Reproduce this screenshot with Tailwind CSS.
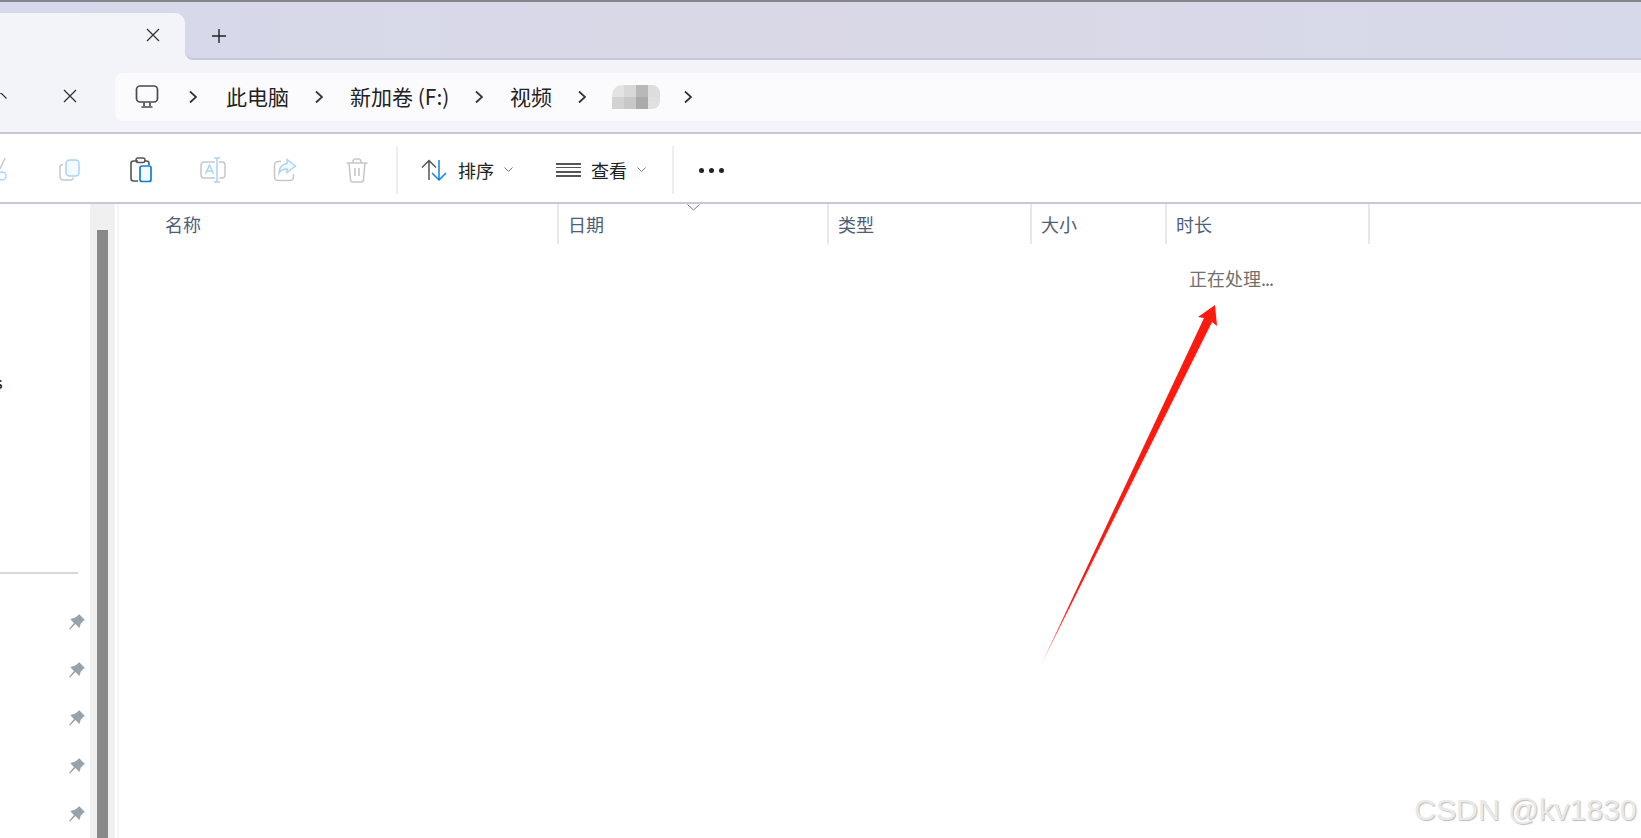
<!DOCTYPE html>
<html lang="zh-CN">
<head>
  <meta charset="UTF-8" />
  <title>视频 - 文件资源管理器</title>
  <script src="https://cdn.jsdelivr.net/npm/@tailwindcss/browser@4"></script>
</head>
<body class="bg-white font-['Noto_Sans_CJK_SC','Liberation_Sans',sans-serif] overflow-hidden">
<div class="relative w-[1641px] h-[838px] overflow-hidden flex flex-col">

  <!-- window edge -->
  <div class="h-[2px] bg-[#85868c]"></div>

  <!-- tab strip -->
  <div class="h-[58px] flex bg-linear-to-r from-[#d5d9eb] via-[#dad8e6] to-[#d6d9ea]">
    <div class="w-[185px] mt-[11px] bg-[#f3f4fa] rounded-tr-[10px] flex justify-end items-start pr-[24px] pt-[14px]">
      <svg class="w-[16px] h-[16px]" viewBox="0 0 16 16" fill="none" stroke="#333" stroke-width="1.3"><path d="M2 2l12 12M14 2L2 14"/></svg>
    </div>
    <div class="relative flex-1 border-b-2 border-[#c6c7da] pl-[26px] pt-[26px]">
      <div class="absolute left-0 -bottom-[2px] w-[8px] h-[10px] bg-[#f3f4fa]">
        <div class="w-full h-full bg-[#d5d9eb] border-b-2 border-[#c6c7da] rounded-bl-[8px]"></div>
      </div>
      <svg class="w-[16px] h-[16px]" viewBox="0 0 16 16" fill="none" stroke="#222" stroke-width="1.4"><path d="M8 1v14M1 8h14"/></svg>
    </div>
  </div>

  <!-- nav row -->
  <div class="h-[74px] flex items-center bg-[#f3f4f9] border-b-2 border-[#c6c7da]">
    <div class="w-[63px] flex">
      <svg class="w-[7px] h-[6px]" viewBox="0 0 7 6" fill="none" stroke="#333" stroke-width="1.2"><path d="M0 0.6L1 0l5.5 5.5"/></svg>
    </div>
    <svg class="w-[14px] h-[14px]" viewBox="0 0 14 14" fill="none" stroke="#333" stroke-width="1.3"><path d="M1 1l12 12M13 1L1 13"/></svg>
    <div class="ml-[38px] mt-[2px] flex-1 h-[48px] bg-[#fbfbfe] rounded-l-[8px] flex items-center text-[21px] text-[#222]">
      <svg class="ml-[20px] w-[24px] h-[24px]" viewBox="0 0 24 24" fill="none" stroke="#4a4a4a" stroke-width="1.7">
        <rect x="1.5" y="1" width="21" height="16" rx="3.5"/><path d="M9 17.5v3.5M15 17.5v3.5M6.5 22h11"/>
      </svg>
      <svg class="ml-[29px] w-[10px] h-[14px]" viewBox="0 0 10 14" fill="none" stroke="#333" stroke-width="1.7"><path d="M2 1.5L8 7l-6 5.500"/></svg>
      <span class="ml-[28px] w-[63px] whitespace-nowrap">此电脑</span>
      <svg class="ml-[25px] w-[10px] h-[14px]" viewBox="0 0 10 14" fill="none" stroke="#333" stroke-width="1.7"><path d="M2 1.5L8 7l-6 5.500"/></svg>
      <span class="ml-[26px] w-[98px] whitespace-nowrap">新加卷 (F:)</span>
      <svg class="ml-[26px] w-[10px] h-[14px]" viewBox="0 0 10 14" fill="none" stroke="#333" stroke-width="1.7"><path d="M2 1.5L8 7l-6 5.500"/></svg>
      <span class="ml-[26px] w-[44px] whitespace-nowrap">视频</span>
      <svg class="ml-[23px] w-[10px] h-[14px]" viewBox="0 0 10 14" fill="none" stroke="#333" stroke-width="1.7"><path d="M2 1.5L8 7l-6 5.500"/></svg>
      <!-- pixelated folder name -->
      <div class="ml-[25px] w-[48px] h-[24px] grid grid-cols-4 overflow-hidden rounded-r-[8px]">
        <div class="bg-[#e3e3e3] rounded-tl-[10px]"></div><div class="bg-[#d8d8d8]"></div><div class="bg-[#b8b8b8]"></div><div class="bg-[#dddddd]"></div>
        <div class="bg-[#d2d2d2]"></div><div class="bg-[#c8c8c8]"></div><div class="bg-[#aaaaaa]"></div><div class="bg-[#e0e0e0]"></div>
      </div>
      <svg class="ml-[23px] w-[10px] h-[14px]" viewBox="0 0 10 14" fill="none" stroke="#333" stroke-width="1.7"><path d="M2 1.5L8 7l-6 5.500"/></svg>
    </div>
  </div>

  <!-- command bar -->
  <div class="h-[70px] pt-[4px] flex items-center bg-white border-b-2 border-[#c8c8d8] text-[18px] text-[#222]">
    <svg class="w-[8px] h-[24px]" viewBox="0 0 8 24" fill="none">
      <path d="M5 0L0 11" stroke="#c8c8c8" stroke-width="1.500"/>
      <circle cx="2" cy="18" r="4" stroke="#a9d4f5" stroke-width="1.500"/>
    </svg>
    <svg class="ml-[50px] w-[24px] h-[24px]" viewBox="0 0 24 24" fill="none" stroke-width="1.500">
      <path d="M5 6.500h-.5A3 3 0 0 0 2 9.500v9A3.500 3.500 0 0 0 5.500 22h7a3 3 0 0 0 3-2.500" stroke="#c8c8c8"/>
      <rect x="8" y="2" width="13" height="16" rx="3.500" stroke="#a9d4f5" fill="#f4faff"/>
    </svg>
    <svg class="ml-[47px] w-[24px] h-[26px]" viewBox="0 0 24 26" fill="none">
      <path d="M9 4H4.500A2.500 2.500 0 0 0 2 6.500v15A2.500 2.500 0 0 0 4.500 24H9M15 4h2.500A2.500 2.500 0 0 1 20 6.500V8" stroke="#555" stroke-width="1.600"/>
      <rect x="7" y="1" width="9" height="4.500" rx="2" stroke="#555" stroke-width="1.500"/>
      <rect x="11" y="9" width="11" height="15.500" rx="2" stroke="#0f7fd8" stroke-width="1.700" fill="#f3f9fe"/>
    </svg>
    <svg class="ml-[47px] w-[26px] h-[26px]" viewBox="0 0 26 26" fill="none" stroke-width="1.500">
      <path d="M15 5H4A3 3 0 0 0 1 8v10a3 3 0 0 0 3 3h11M19 5h3a3 3 0 0 1 3 3v10a3 3 0 0 1-3 3h-3" stroke="#c8c8c8"/>
      <path d="M17 1v24M14 1h6M14 25h6M5.500 17L9.500 8l4 9M7 14h5" stroke="#a9d4f5"/>
    </svg>
    <svg class="ml-[47px] w-[24px] h-[24px]" viewBox="0 0 24 24" fill="none" stroke-width="1.500">
      <path d="M8 3.500H5A3.500 3.500 0 0 0 1.500 7v12A3.500 3.500 0 0 0 5 22.500h12a3.500 3.500 0 0 0 3.500-3.500v-3" stroke="#c8c8c8"/>
      <path d="M14 1.500l8.500 6.500L14 14.500v-3.500c-4 0-6.500 1.500-8 4 0-5 3-9 8-9.500z" stroke="#a9d4f5" fill="#f4faff"/>
    </svg>
    <svg class="ml-[49px] w-[22px] h-[25px]" viewBox="0 0 22 25" fill="none" stroke="#c8c8c8" stroke-width="1.600">
      <path d="M0.500 5h21M7 5V3.500A2.500 2.500 0 0 1 9.500 1h3A2.500 2.500 0 0 1 15 3.500V5M3 5l1.500 16.500A2.500 2.500 0 0 0 7 24h8a2.500 2.500 0 0 0 2.500-2.500L19 5M9 10v8M13 10v8"/>
    </svg>
    <div class="ml-[28px] w-[2px] h-[48px] bg-[#eeeeee]"></div>
    <svg class="ml-[23px] w-[26px] h-[22px]" viewBox="0 0 26 22" fill="none" stroke-width="1.500">
      <path d="M8 21V2M1 8.500L8 1.500l7 7" stroke="#555"/>
      <path d="M18 1v19M11 14l7 7 7-7" stroke="#1483dc"/>
    </svg>
    <span class="ml-[11px] w-[36px] whitespace-nowrap">排序</span>
    <svg class="ml-[10px] w-[9px] h-[6px]" viewBox="0 0 9 6" fill="none" stroke="#777" stroke-width="1"><path d="M.5 .5l4 4 4-4"/></svg>
    <div class="ml-[43px] w-[25px] h-[15px] flex flex-col justify-between">
      <div class="h-[2px] bg-[#555]"></div><div class="h-[1px] bg-[#555]"></div><div class="h-[2px] bg-[#555]"></div><div class="h-[2px] bg-[#555]"></div>
    </div>
    <span class="ml-[10px] w-[36px] whitespace-nowrap">查看</span>
    <svg class="ml-[10px] w-[9px] h-[6px]" viewBox="0 0 9 6" fill="none" stroke="#777" stroke-width="1"><path d="M.5 .5l4 4 4-4"/></svg>
    <div class="ml-[26px] w-[2px] h-[48px] bg-[#eeeeee]"></div>
    <div class="ml-[25px] flex gap-[5px]">
      <div class="w-[5px] h-[5px] rounded-full bg-[#222]"></div>
      <div class="w-[5px] h-[5px] rounded-full bg-[#222]"></div>
      <div class="w-[5px] h-[5px] rounded-full bg-[#222]"></div>
    </div>
  </div>

  <!-- body -->
  <div class="flex-1 flex min-h-0">
    <!-- nav pane -->
    <div class="w-[90px] flex flex-col overflow-hidden">
      <span class="h-[16px] mt-[170px] -ml-[5px] text-[16px] leading-[16px] text-black">s</span>
      <div class="mt-[182px] w-[78px] h-[2px] bg-[#d8d8d8]"></div>
      <div class="mt-[38px] pl-[69px] flex flex-col gap-[28px]">
        <svg class="w-[16px] h-[20px]" viewBox="0 0 16 16" fill="#96a3aa"><path d="M10 0l6 6-1.500 .8-3 3.200-.5 3-1 .8L6.500 10 1 15.500 0 15l5-6-3.500-3.500 1-1 3-.5L9 1.500z"/></svg>
        <svg class="w-[16px] h-[20px]" viewBox="0 0 16 16" fill="#96a3aa"><path d="M10 0l6 6-1.500 .8-3 3.200-.5 3-1 .8L6.500 10 1 15.500 0 15l5-6-3.500-3.500 1-1 3-.5L9 1.500z"/></svg>
        <svg class="w-[16px] h-[20px]" viewBox="0 0 16 16" fill="#96a3aa"><path d="M10 0l6 6-1.500 .8-3 3.200-.5 3-1 .8L6.500 10 1 15.500 0 15l5-6-3.500-3.500 1-1 3-.5L9 1.500z"/></svg>
        <svg class="w-[16px] h-[20px]" viewBox="0 0 16 16" fill="#96a3aa"><path d="M10 0l6 6-1.500 .8-3 3.200-.5 3-1 .8L6.500 10 1 15.500 0 15l5-6-3.500-3.500 1-1 3-.5L9 1.500z"/></svg>
        <svg class="w-[16px] h-[20px]" viewBox="0 0 16 16" fill="#96a3aa"><path d="M10 0l6 6-1.500 .8-3 3.200-.5 3-1 .8L6.500 10 1 15.500 0 15l5-6-3.500-3.500 1-1 3-.5L9 1.500z"/></svg>
      </div>
    </div>
    <!-- scrollbar -->
    <div class="w-[25px] bg-[#f0f0f0] pl-[7px] pt-[26px]">
      <div class="w-[11px] h-full bg-[#888888]"></div>
    </div>
    <div class="w-[2px]"></div>
    <div class="w-[2px] bg-[#f5f5f5]"></div>

    <!-- file list -->
    <div class="flex-1 flex flex-col">
      <div class="h-[40px] flex text-[18px] leading-[22px] text-[#4d5e78]">
        <div class="w-[440px] pl-[46px] pt-[9px] border-r-2 border-[#e8e8e8]">名称</div>
        <div class="relative w-[270px] pl-[9px] pt-[9px] border-r-2 border-[#e8e8e8]">日期
          <svg class="absolute right-[127px] top-0 w-[13px] h-[7px]" viewBox="0 0 13 7" fill="none" stroke="#777" stroke-width="1"><path d="M.5 .5l6 5.500 6-5.500"/></svg>
        </div>
        <div class="w-[203px] pl-[9px] pt-[9px] border-r-2 border-[#e8e8e8]">类型</div>
        <div class="w-[135px] pl-[9px] pt-[9px] border-r-2 border-[#e8e8e8]">大小</div>
        <div class="w-[203px] pl-[9px] pt-[9px] border-r-2 border-[#e8e8e8]">时长</div>
      </div>
      <div class="pl-[1070px] pt-[22px] text-[18px] leading-[24px] text-[#72706e] whitespace-nowrap">正在处理<span class="tracking-[-1px]">...</span></div>
    </div>
  </div>

  <!-- red annotation arrow -->
  <svg class="absolute left-0 top-0 pointer-events-none" width="1641" height="838" viewBox="0 0 1641 838">
    <defs>
      <linearGradient id="tail" gradientUnits="userSpaceOnUse" x1="1041" y1="665" x2="1070" y2="605">
        <stop offset="0" stop-color="#ff1a10" stop-opacity="0.5"/>
        <stop offset="1" stop-color="#ff1a10"/>
      </linearGradient>
    </defs>
    <path d="M1041 665L1204 318L1198 317L1215 305L1217 326L1212 322Z" fill="url(#tail)"/>
  </svg>

  <!-- watermark -->
  <div class="absolute left-[1414px] top-[792px] text-[30.3px] leading-[36px] font-['Liberation_Sans',sans-serif] text-[#e9e9e9] [text-shadow:1px_1px_1px_#bdbdbd] whitespace-nowrap">CSDN @kv1830</div>
</div>
</body>
</html>
